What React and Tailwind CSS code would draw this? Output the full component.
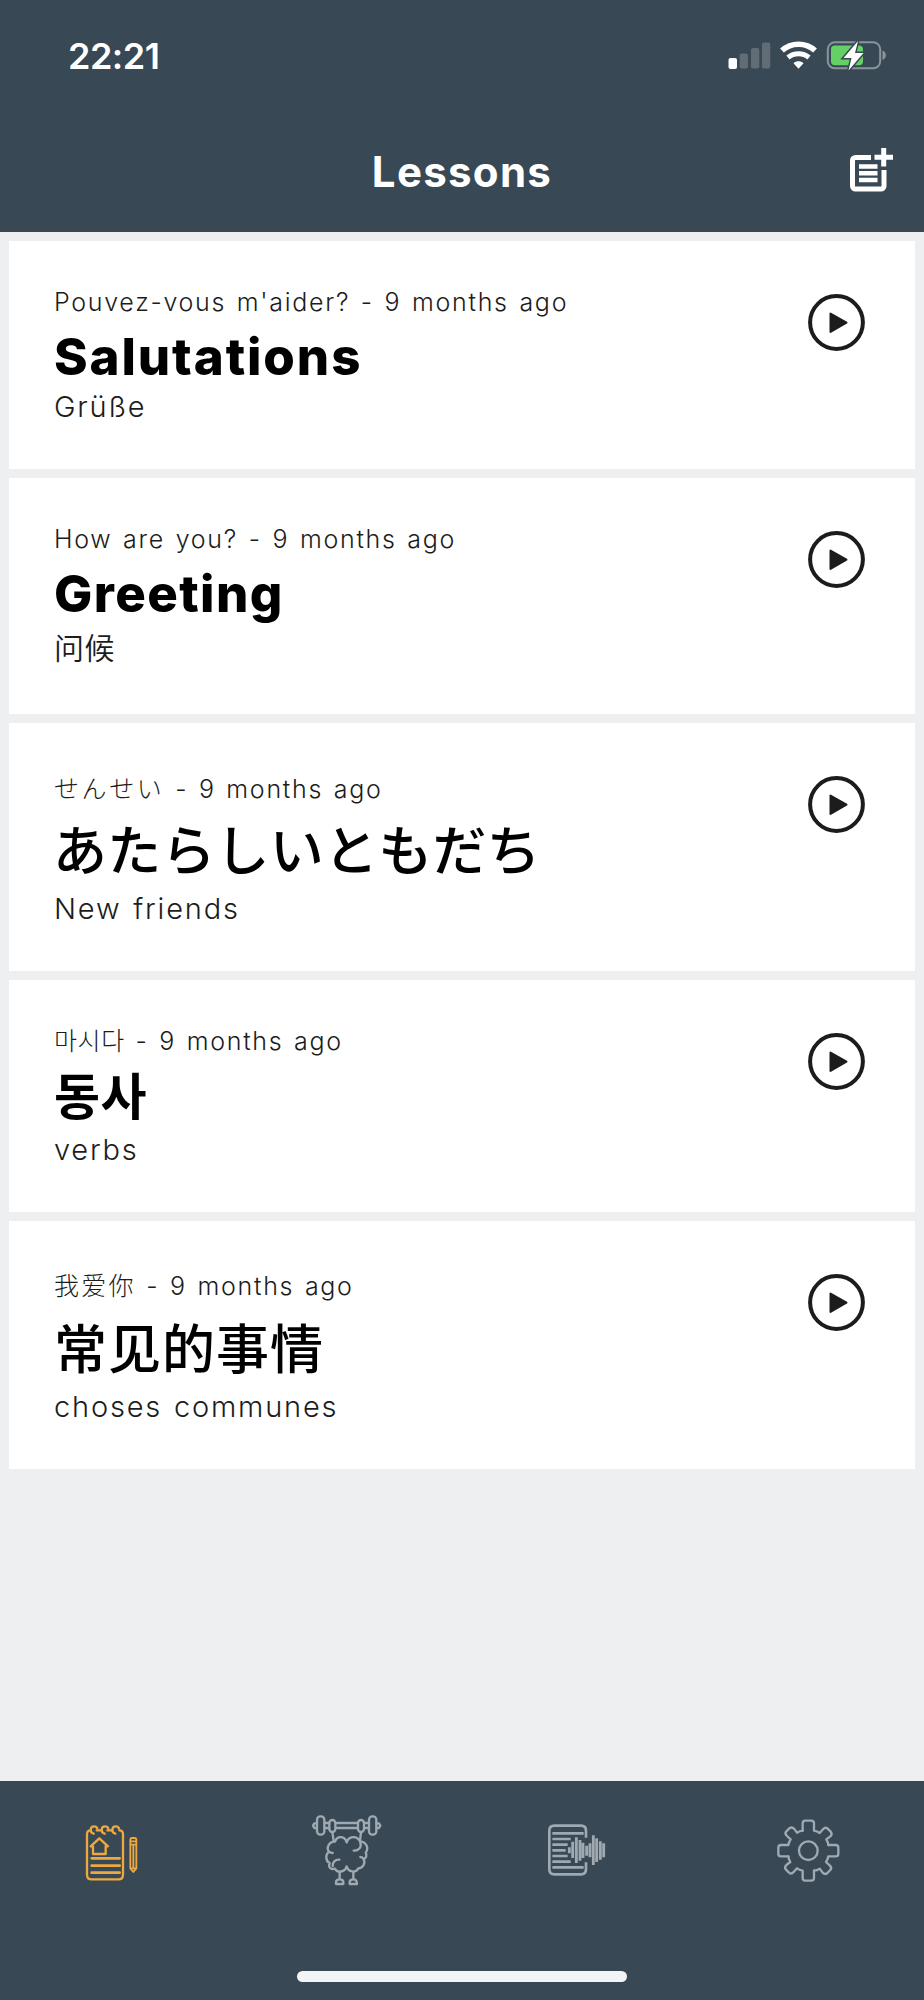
import React from 'react';

const lessons = [
  { id: 1, phrase: "Pouvez-vous m'aider?", title: 'Salutations', subtitle: 'Grüße', lang: 'fr', card: 'h-[228px]', text: 'pt-[41px]', titleStyle: 'h-[70px] leading-[70px] text-[51px] font-extrabold tracking-[1.9px]' },
  { id: 2, phrase: 'How are you?', title: 'Greeting', subtitle: '问候', lang: 'zh-CN', card: 'h-[236px]', text: 'pt-[41px]', titleStyle: 'h-[74px] leading-[70px] text-[51px] font-extrabold tracking-[1.4px]', subtitleStyle: 'text-[30px] font-[350] tracking-[0.5px]' },
  { id: 3, phrase: 'せんせい', title: 'あたらしいともだち', subtitle: 'New friends', lang: 'ja', card: 'h-[248px]', text: 'pt-[46px]', phraseStyle: 'text-[25px] tracking-[2.6px]', titleStyle: 'h-[85px] leading-[85px] -ml-px text-[54px] font-medium tracking-[0.2px]' },
  { id: 4, phrase: '마시다', title: '동사', subtitle: 'verbs', lang: 'ko', card: 'h-[232px]', text: 'pt-[41px]', phraseStyle: 'text-[25px] tracking-[0.6px]', titleStyle: 'h-[74px] leading-[72px] text-[50px] font-bold tracking-[0.6px]' },
  { id: 5, phrase: '我爱你', title: '常见的事情', subtitle: 'choses communes', lang: 'zh-CN', card: 'h-[248px]', text: 'pt-[45px]', phraseStyle: 'text-[25px] tracking-[2.2px]', titleStyle: 'h-[86px] leading-[88px] text-[53px] font-medium tracking-[1px]' },
];

const StatusIcons = () => (
  <svg width="160" height="32" viewBox="727 40 160 32" fill="none">
    <rect x="728.5" y="58" width="8.5" height="11" rx="2" fill="#fff" />
    <rect x="739.7" y="53.5" width="8.3" height="15" rx="2" fill="#606d77" />
    <rect x="751" y="48" width="8.3" height="20.5" rx="2" fill="#606d77" />
    <rect x="762" y="42.5" width="8.3" height="26" rx="2" fill="#606d77" />
    <path d="M782 50.5c9-8.5 24-8.5 33 0" stroke="#fff" strokeWidth="5.5" />
    <path d="M788 57.5c6-5 15-5 21 0" stroke="#fff" strokeWidth="5" />
    <path d="M793.5 63.3c3-2.6 7-2.6 10 0l-5 5.5z" fill="#fff" />
    <rect x="827.8" y="42.3" width="52.4" height="26" rx="7" stroke="#8a949b" strokeWidth="2" />
    <path d="M882.5 50.5c4.5 1.5 4.5 8 0 9.5z" fill="#8a949b" />
    <rect x="831" y="45.6" width="32" height="19.6" rx="4" fill="#65d065" />
    <path d="M858 41l-14.5 17h8l-3 12.5L863.5 53h-8.5z" fill="#fff" stroke="#384854" strokeWidth="3" paintOrder="stroke" />
  </svg>
);

const AddLessonIcon = () => (
  <svg width="44" height="46" viewBox="850 146 44 46" fill="none" stroke="#fff" strokeWidth="5">
    <path d="M871 156.5H855.5a3 3 0 0 0-3 3V185a3 3 0 0 0 3 3H881a3 3 0 0 0 3-3V169" />
    <path d="M859 165.5h18.5M859 172.2h18.5M859 179h18.5" strokeWidth="4.6" />
    <path d="M874.5 156.3H893M883.7 147v18.5" />
  </svg>
);

const PlayIcon = () => (
  <svg width="57" height="57" viewBox="0 0 57 57" fill="none">
    <circle cx="28.5" cy="28.5" r="26.4" stroke="#1c1c1c" strokeWidth="4" />
    <path d="M22.5 19.5v18.5L38.5 28.7z" fill="#1c1c1c" stroke="#1c1c1c" strokeWidth="2" strokeLinejoin="round" />
  </svg>
);

const NotepadIcon = () => (
  <svg width="90" height="100" viewBox="0 0 270 300" fill="none" stroke="#eda93f" strokeWidth="7" strokeLinecap="round" strokeLinejoin="round">
    <path d="M62 91Q51 91 51 103V224Q51 238 65 238H145Q159 238 159 224V103Q159 91 148 91M80 91h14M112 91h14" />
    <path d="M71 101C58 98 60 79 72 79Q80 79 82 86M104 101C91 98 93 79 105 79Q113 79 115 86M136 101C123 98 125 79 137 79Q145 79 147 86" />
    <path d="M69 139H62L88 115L114 139H107V162H69Z" />
    <path d="M65 175H149M65 197H149M65 218H149" strokeWidth="8" />
    <path d="M181 119Q181 114 186 114H194Q199 114 199 119V205L190 216L181 205ZM181 124H199M181 134H199M181 205H199M190 137V203" strokeWidth="5.5" />
  </svg>
);

const BrainIcon = () => (
  <svg width="90" height="100" viewBox="0 0 270 300" fill="none" stroke="#9fa9b1" strokeWidth="7" strokeLinecap="round" strokeLinejoin="round">
    <path d="M108 69H172M108 84H172M74 69H87M74 84H87M193 69H206M193 84H206M50 70H43L39 77L43 84H50M230 70H237L241 77L237 84H230" />
    <rect x="51" y="49" width="22" height="55" rx="10" />
    <rect x="88" y="60" width="18" height="36" rx="9" />
    <rect x="174" y="60" width="18" height="36" rx="9" />
    <rect x="207" y="49" width="22" height="55" rx="10" />
    <path d="M97 97L101 122M183 97L180 122" />
    <path d="M140 127C135 108 112 105 105 125C87 124 78 144 87 155C75 164 77 185 89 189C84 202 92 210 105 206C112 220 135 217 140 199C145 217 168 220 175 205C189 205 197 190 191 177C200 174 201 165 197 158C208 144 198 125 180 124C170 105 146 108 140 127Z" />
    <path d="M87 155Q92 159 98 159M98 198C97 187 106 178 118 179M181 127C186 142 175 153 161 152M191 177Q187 171 181 171" />
    <path d="M119 216V235M160 216V235M108 252V247Q108 238 119 238Q130 238 130 247V252ZM149 252V247Q149 238 160 238Q171 238 171 252Z" />
  </svg>
);

const AudioDocIcon = () => (
  <svg width="90" height="100" viewBox="0 0 270 300" fill="none" stroke="#9fa9b1" strokeWidth="8">
    <path d="M168 113V92Q168 77 153 77H73Q58 77 58 92V208Q58 223 73 223H153Q168 223 168 208V187" />
    <path d="M67 100H161M67 117H122M67 134H113M67 151H107M67 168H113M67 185H122M67 202H161" />
    <path d="M118 142V160M128 125V174M139 112V189M150 120V182M159 128V174M170 137V167M180 130V172M190 106V195M200 115V186M211 124V179M221 130V172" strokeWidth="8.5" />
  </svg>
);

const GearIcon = () => {
  // one straight tooth plus one diagonal tooth, repeated for each quadrant
  const teeth = 'M-17 -60V-82Q-17 -90 -9 -90H9Q17 -90 17 -82V-60Q27 -58 34 -53L44 -64Q51 -72 58 -66L67 -57Q73 -50 66 -43L54 -34Q59 -26 60 -17';
  return (
    <svg width="90" height="100" viewBox="0 0 270 300" fill="none" stroke="#9fa9b1" strokeWidth="7" strokeLinecap="round" strokeLinejoin="round">
      <g transform="translate(145 152)">
        <circle r="28" />
        <path d={teeth} />
        <path d={teeth} transform="rotate(90)" />
        <path d={teeth} transform="rotate(180)" />
        <path d={teeth} transform="rotate(270)" />
      </g>
    </svg>
  );
};

const LessonCard = ({ lesson }) => (
  <div className={`flex justify-between bg-white pl-[45px] pr-[50px] ${lesson.card}`}>
    <div lang={lesson.lang} className={`whitespace-nowrap text-black ${lesson.text}`}>
      <p className="h-10 leading-10 text-[25px] font-light tracking-[1.7px] [word-spacing:2px] text-[#1c1c1c]">
        <span className={lesson.phraseStyle}>{lesson.phrase}</span> - 9 months ago
      </p>
      <h2 className={lesson.titleStyle}>{lesson.title}</h2>
      <p className={`h-[30px] leading-[30px] [word-spacing:2px] text-[#1c1c1c] ${lesson.subtitleStyle || 'text-[29px] font-light tracking-[1.8px]'}`}>
        {lesson.subtitle}
      </p>
    </div>
    <button className="mt-[53px] h-[57px] w-[57px]" aria-label="Play">
      <PlayIcon />
    </button>
  </div>
);

const App = () => {
  return (
    <div className="flex h-[2000px] w-[924px] flex-col overflow-hidden bg-[#edeff1] font-['Inter','Noto_Sans_CJK_SC',sans-serif]">
      <header className="h-[232px] shrink-0 bg-[#384854] text-white">
        <div className="flex h-[112px] items-center justify-between pl-[68px] pr-[37px]">
          <span className="text-[36px] font-semibold leading-none tracking-[-0.5px]">22:21</span>
          <StatusIcons />
        </div>
        <div className="grid h-[115px] grid-cols-3 items-center pr-[30px] pl-[30px]">
          <h1 className="col-start-2 pt-[3px] text-center text-[42px] font-bold tracking-[1.3px]">Lessons</h1>
          <button className="justify-self-end" aria-label="Add lesson">
            <AddLessonIcon />
          </button>
        </div>
      </header>

      <main className="flex flex-1 flex-col gap-[9px] px-[9px] pt-[9px]">
        {lessons.map((lesson) => (
          <LessonCard key={lesson.id} lesson={lesson} />
        ))}
      </main>

      <footer className="flex h-[219px] shrink-0 flex-col items-center justify-between bg-[#384854] pt-[19px] pb-[18px]">
        <nav className="flex w-full gap-[140px] pl-[70px]">
          <NotepadIcon />
          <BrainIcon />
          <AudioDocIcon />
          <GearIcon />
        </nav>
        <div className="h-[11px] w-[330px] rounded-full bg-[#f3f4f5]" />
      </footer>
    </div>
  );
};

export default App;
